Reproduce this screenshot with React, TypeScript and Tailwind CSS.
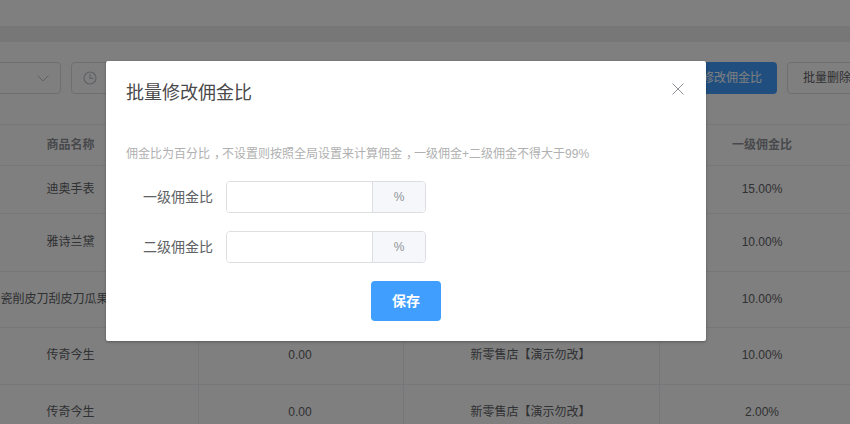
const font = { fontFamily: '"Liberation Sans", "Noto Sans CJK SC", sans-serif' };

const rows = [
  { h: "h-[48px]", name: "迪奥手表", a: "", b: "", c: "15.00%", pad: false },
  { h: "h-[58px]", name: "雅诗兰黛", a: "", b: "", c: "10.00%", pad: false },
  { h: "h-[56px]", name: "瓷削皮刀刮皮刀瓜果刨子", a: "", b: "", c: "10.00%", pad: true },
  { h: "h-[57px]", name: "传奇今生", a: "0.00", b: "新零售店【演示勿改】", c: "10.00%", pad: false },
  { h: "h-[57px]", name: "传奇今生", a: "0.00", b: "新零售店【演示勿改】", c: "2.00%", pad: false },
];

function Cell({ children, last, pad }: { children?: React.ReactNode; last?: boolean; pad?: boolean }) {
  return (
    <div className={`flex items-center justify-center whitespace-nowrap ${pad ? "pr-[8px]" : ""} ${last ? "" : "border-r border-[#ebeef5]"}`}>
      {children}
    </div>
  );
}

function Comma() {
  return <span className="pl-[4px] tracking-[-4px]">，</span>;
}

function RatioField({ label }: { label: string }) {
  return (
    <div className="flex items-center h-[32px]">
      <div className="w-[107px] text-right text-[14px] text-[#606266] leading-none">{label}</div>
      <div className="ml-[13px] flex w-[200px] h-[32px] rounded-[4px] border border-[#dcdee2] overflow-hidden">
        <div className="w-[145px] bg-white" />
        <div className="flex-1 flex items-center justify-center pb-[1px] bg-[#f5f7fa] border-l border-[#dcdee2] text-[12px] text-[#909399]">%</div>
      </div>
    </div>
  );
}

export default function App() {
  return (
    <div className="relative w-[850px] h-[424px] overflow-hidden bg-white" style={font}>
      <div className="pt-[26px]">
        <div className="h-[16px] bg-[#eeeeee]" />
      </div>

      <div className="flex mt-[20px] h-[32px] -ml-[100px] -mr-[17px] text-[12px]">
        <div className="w-[161px] rounded-[4px] border border-[#dcdfe6] flex items-center justify-end pr-[11px]">
          <svg width="12" height="12" viewBox="0 0 12 12" fill="none" stroke="#c0c4cc" strokeWidth="1">
            <path d="M0.5 3.5L6 9L11.5 3.5" />
          </svg>
        </div>
        <div className="ml-[10px] w-[300px] rounded-[4px] border border-[#dcdfe6] flex items-center pl-[11px]">
          <svg width="14" height="14" viewBox="0 0 14 14" fill="none" stroke="#c0c4cc" strokeWidth="1.2">
            <circle cx="7" cy="7" r="6" />
            <path d="M7 3.2V7.4H10.4" />
          </svg>
        </div>
        <div className="ml-auto w-[114px] rounded-[4px] bg-[#409eff] text-white flex items-center justify-center whitespace-nowrap">批量修改佣金比</div>
        <div className="ml-[10px] w-[80px] rounded-[4px] border border-[#dcdfe6] text-[#606266] flex items-center justify-center whitespace-nowrap">批量删除</div>
      </div>

      <div className="mt-[30px] -ml-[57px] w-[923px] border-t border-[#ebeef5] text-[12px] text-[#606266]">
        <div className="grid grid-cols-[256px_205px_256px_206px] h-[41px] border-b border-[#ebeef5] font-bold text-[#909399] [&>div:not(:first-child)]:pr-[2px]">
          <Cell>商品名称</Cell>
          <Cell />
          <Cell />
          <Cell last>一级佣金比</Cell>
        </div>
        {rows.map((r, i) => (
          <div key={i} className={`grid grid-cols-[256px_205px_256px_206px] ${r.h} border-b border-[#ebeef5] [&>div]:pb-[2px] [&>div:not(:first-child)]:pr-[2px]`}>
            <Cell pad={r.pad}>{r.name}</Cell>
            <Cell>{r.a}</Cell>
            <Cell>{r.b}</Cell>
            <Cell last>{r.c}</Cell>
          </div>
        ))}
      </div>

      <div className="absolute inset-0 bg-black/50" />

      <div className="absolute left-[106px] top-[61px] w-[600px] h-[280px] bg-white rounded-[2px] shadow-[0_1px_3px_rgba(0,0,0,0.3)]">
        <div className="relative pt-[20px] pl-[20px] h-[78px]">
          <div className="text-[18px] leading-[24px] text-[#4a4a4a]">批量修改佣金比</div>
          <svg className="absolute left-[566px] top-[22px]" width="12" height="12" viewBox="0 0 12 12" fill="none" stroke="#909399" strokeWidth="1">
            <path d="M0.5 0.5L11.5 11.5M11.5 0.5L0.5 11.5" />
          </svg>
        </div>
        <div className="pl-[20px] pt-[1px] h-[28px] text-[12px] leading-[28px] text-[#b0b0b0]">
          佣金比为百分比<Comma />不设置则按照全局设置来计算佣金<Comma />一级佣金+二级佣金不得大于99%
        </div>
        <div className="mt-[14px] flex flex-col gap-[18px]">
          <RatioField label="一级佣金比" />
          <RatioField label="二级佣金比" />
        </div>
        <div className="mt-[18px] flex justify-center">
          <div className="w-[70px] h-[40px] rounded-[4px] bg-[#409eff] text-white text-[14px] font-bold flex items-center justify-center">保存</div>
        </div>
      </div>
    </div>
  );
}
